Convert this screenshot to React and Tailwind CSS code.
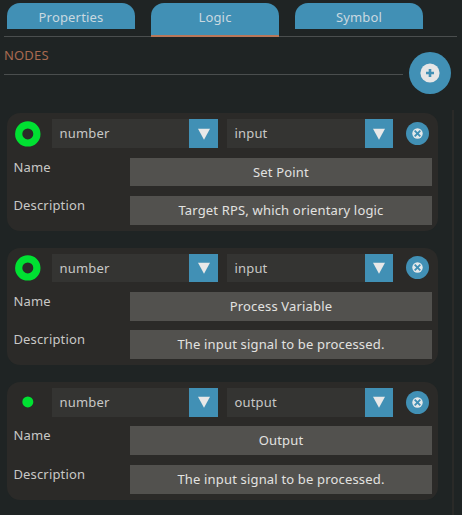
const nodes = [
  { type: 'number', dir: 'input', name: 'Set Point', description: 'Target RPS, which orientary logic' },
  { type: 'number', dir: 'input', name: 'Process Variable', description: 'The input signal to be processed.' },
  { type: 'number', dir: 'output', name: 'Output', description: 'The input signal to be processed.' },
];

function Tab({ label, active }) {
  return (
    <button
      className={
        active
          ? 'h-[34px] w-32 rounded-t-[13px] border-b-2 border-[#b9775a] bg-[#4190b5] pb-1 text-[#c9d9e0]'
          : 'h-[26px] w-32 rounded-t-[13px] bg-[#4190b5] text-[#c9d9e0]'
      }
    >
      <span className={active ? 'block leading-[26px]' : 'block pt-px leading-[26px]'}>{label}</span>
    </button>
  );
}

function Select({ value, arrowClass, className }) {
  return (
    <div className={`flex h-[28.8px] shrink-0 bg-[#343432] text-[#c8c8c6] ${className}`}>
      <span className="flex-1 pl-[7.5px] leading-[28.8px]">{value}</span>
      <span className={`flex items-center justify-center bg-[#4190b5] ${arrowClass}`}>
        <svg width="12" height="12" viewBox="0 0 12 12">
          <path d="M0 0.8h12L6 11.8z" fill="#e8e8e8" />
        </svg>
      </span>
    </div>
  );
}

function Field({ label, value }) {
  return (
    <div className="mt-[9.6px] flex h-[28.8px]">
      <span className="w-[123px] pl-[6.4px] leading-[18px] text-[#c8c8c6]">{label}</span>
      <span className="w-[302px] bg-[#52514e] text-center leading-[28.8px] text-[#e2e2e0]">{value}</span>
    </div>
  );
}

function NodeCard({ node }) {
  return (
    <section className="h-[117.6px] w-[431px] rounded-[13px] bg-[#2b2a28] pt-[6px]">
      <div className="flex items-center">
        <svg className="ml-2 mr-[11px] shrink-0" width="26" height="26" viewBox="0 0 26 26">
          {node.dir === 'input' ? (
            <circle cx="12.8" cy="12.9" r="9.1" fill="none" stroke="#00e132" strokeWidth="7.2" />
          ) : (
            <circle cx="12.8" cy="12.9" r="5.5" fill="#00e132" />
          )}
        </svg>
        <Select value={node.type} className="w-[166px]" arrowClass="w-[29px]" />
        <Select value={node.dir} className="ml-[9px] w-[166px]" arrowClass="w-[28px]" />
        <button className="ml-[13px]">
          <svg width="23" height="23" viewBox="0 0 23 23">
            <circle cx="11.5" cy="11.5" r="11.5" fill="#4190b5" />
            <circle cx="11.5" cy="11.5" r="5.2" fill="#e4e8ea" />
            <path d="M8.7 8.7l5.6 5.6M14.3 8.7l-5.6 5.6" stroke="#4190b5" strokeWidth="1.9" />
          </svg>
        </button>
      </div>
      <Field label="Name" value={node.name} />
      <Field label="Description" value={node.description} />
    </section>
  );
}

export default function App() {
  return (
    <main className="h-[515px] w-[462px] overflow-hidden bg-[#1f2424] font-['Noto_Sans',sans-serif] text-[13px] tracking-[0.17px]">
      <div className="h-[37px] pt-[3px]">
        <nav className="flex items-start gap-4 pl-[7px]">
          <Tab label="Properties" />
          <Tab label="Logic" active />
          <Tab label="Symbol" />
        </nav>
      </div>
      <div className="-mt-px flex h-px justify-between pl-1 pr-[5px]">
        <span className="w-[147px] bg-[#4a4e4e]" />
        <span className="w-[178px] bg-[#4a4e4e]" />
      </div>
      <header className="flex h-[73px] pl-1">
        <div className="h-[38px] w-[399px] border-b border-[#4a4e4e] pt-[9px] leading-[18px] text-[#a86a50]">NODES</div>
        <button className="ml-1.5 mt-[15px] h-[42px]">
          <svg width="42" height="42" viewBox="0 0 42 42">
            <circle cx="21" cy="21" r="21" fill="#4190b5" />
            <circle cx="21" cy="21" r="9.6" fill="#e6e6e6" />
            <path d="M21 17v8M17 21h8" stroke="#4190b5" strokeWidth="2.6" />
          </svg>
        </button>
      </header>
      <div className="flex h-[405px] pl-[7px]">
        <div className="flex w-[431px] flex-col gap-[16.8px] pt-[3.2px]">
          {nodes.map((node) => (
            <NodeCard key={node.name} node={node} />
          ))}
        </div>
        <div className="ml-[14px] w-[2px] bg-[#2a2a28]" />
      </div>
    </main>
  );
}
